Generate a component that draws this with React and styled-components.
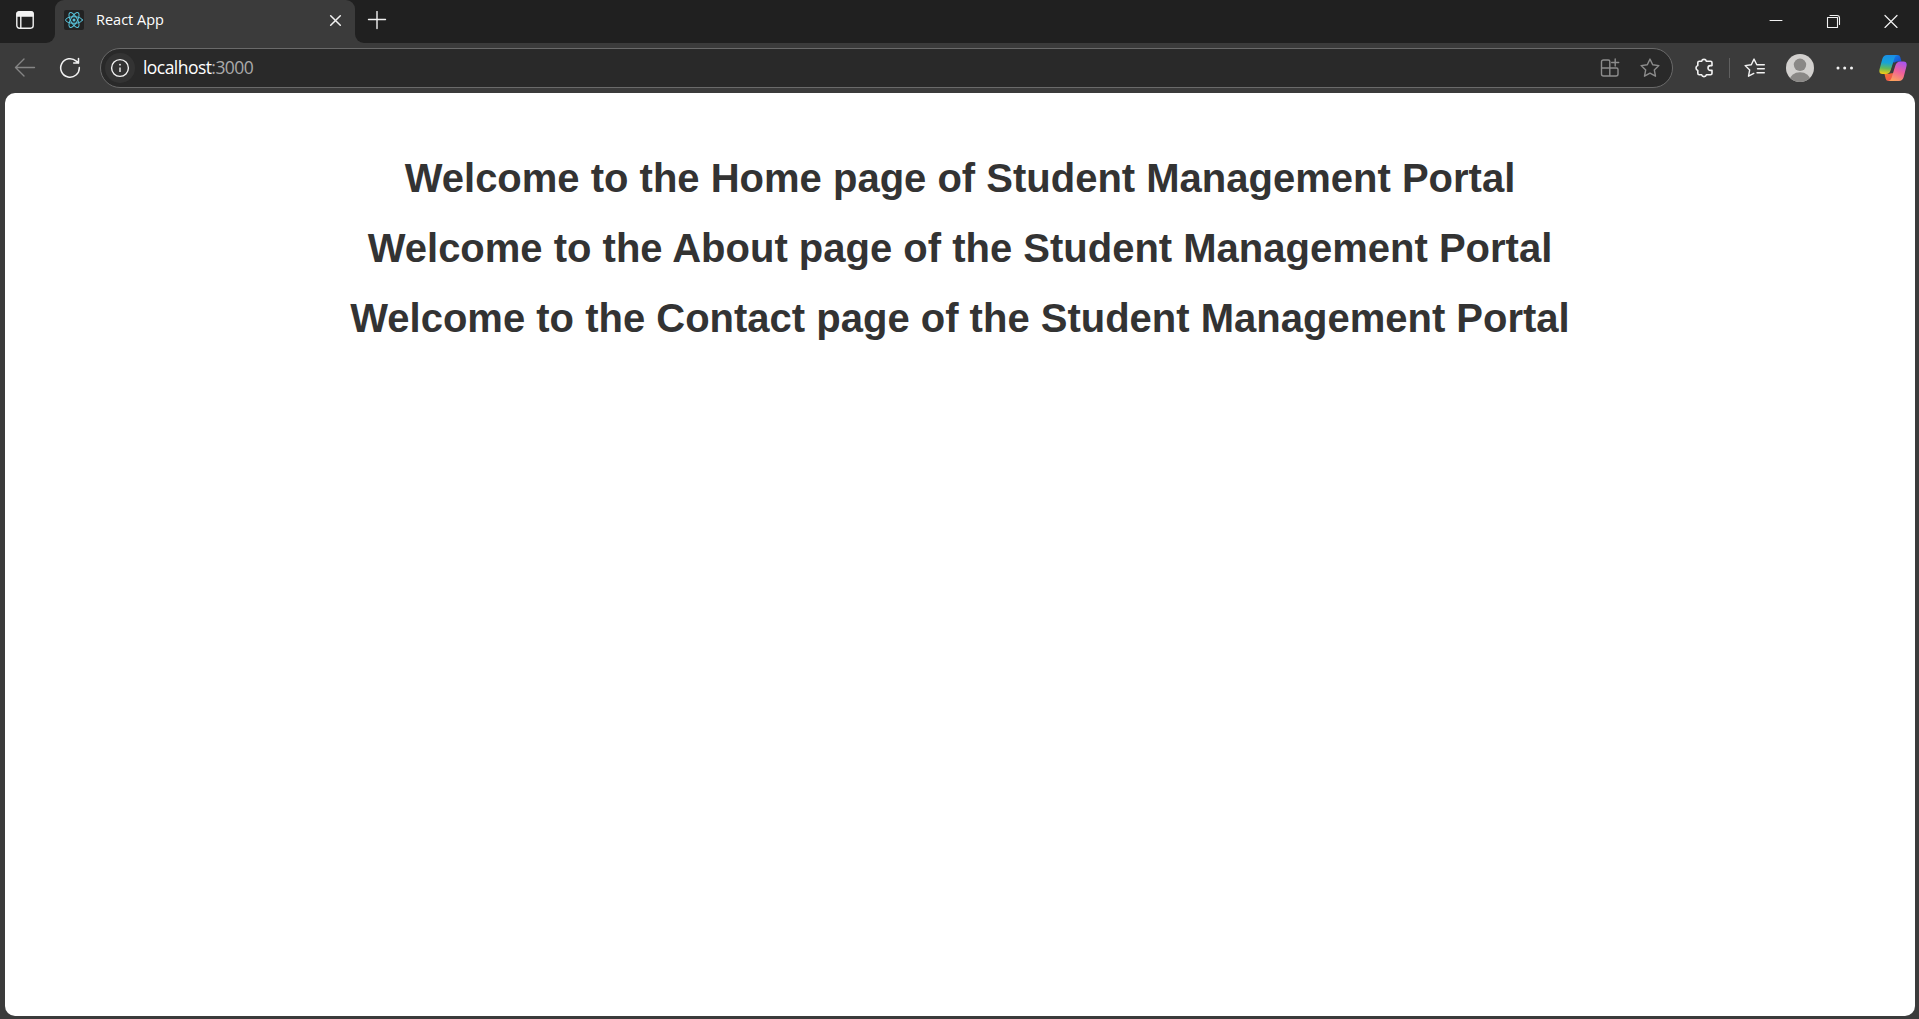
import React from "react";
import styled, { createGlobalStyle } from "styled-components";

const GlobalStyle = createGlobalStyle`
  *, *::before, *::after { box-sizing: border-box; }
  html, body { margin: 0; padding: 0; background: #3b3b3b; overflow: hidden; }
`;

const Window = styled.div`
  display: flex;
  flex-direction: column;
  width: 100vw;
  height: 100vh;
  background: #3b3b3b;
  font-family: "Open Sans", "Noto Sans", sans-serif;
`;

const TabStrip = styled.header`
  display: flex;
  height: 43px;
  flex: none;
`;

const StripStart = styled.div`
  display: flex;
  align-items: center;
  width: 55px;
  padding: 0 0 3px 16px;
  background: #202020;
  border-bottom-right-radius: 9px;
`;

const TabSlot = styled.div`
  width: 300px;
  background: linear-gradient(#202020 50%, #3b3b3b 50%);
`;

const Tab = styled.div`
  display: flex;
  align-items: center;
  height: 43px;
  padding: 0 13px 3px 9px;
  background: #3b3b3b;
  border-radius: 9px 9px 0 0;
`;

const Favicon = styled.span`
  display: flex;
  width: 20px;
  height: 20px;
  background: #222;
  border-radius: 2px;
`;

const TabTitle = styled.span`
  flex: 1;
  margin-left: 12px;
  color: #fff;
  font-size: 14.5px;
  line-height: 20px;
`;

const StripEnd = styled.div`
  display: flex;
  flex: 1;
  align-items: center;
  justify-content: space-between;
  padding: 0 21px 1px 12px;
  background: #202020;
  border-bottom-left-radius: 9px;
`;

const WindowControls = styled.div`
  display: flex;
  gap: 42px;
`;

const Toolbar = styled.nav`
  display: flex;
  align-items: center;
  flex: none;
  height: 50px;
  padding: 0 12px 0 14px;
`;

const Icon = styled.svg`
  display: block;
  flex: none;
  width: ${(p) => p.$w || 20}px;
  height: ${(p) => p.$h || p.$w || 20}px;
  margin-left: ${(p) => p.$gap || 0}px;
  fill: none;
  stroke: ${(p) => p.$color || "#f2f2f2"};
  stroke-width: ${(p) => p.$stroke || 1.4};
  stroke-linecap: round;
  stroke-linejoin: round;
`;

const AddressBar = styled.div`
  display: flex;
  align-items: center;
  flex: 1;
  height: 40px;
  margin-left: 19px;
  padding: 0 12px 0 4px;
  background: #292929;
  border: 1px solid #6a6a6a;
  border-radius: 20px;
`;

const SiteInfo = styled.span`
  display: flex;
  align-items: center;
  justify-content: center;
  width: 30px;
  height: 30px;
  background: #333;
  border-radius: 50%;
`;

const Address = styled.span`
  flex: 1;
  margin-left: 8px;
  padding-bottom: 2px;
  color: #fff;
  font-size: 17.5px;
  line-height: 24px;
  letter-spacing: -0.55px;
`;

const Port = styled.span`
  color: #a9a9a9;
`;

const Divider = styled.span`
  width: 1px;
  height: 20px;
  margin-left: 15px;
  background: #606060;
`;

const Viewport = styled.main`
  flex: 1;
  margin: 0 4px 3px 5px;
  padding-top: 50px;
  background: #fff;
  border-radius: 10px;
`;

const Heading = styled.h1`
  margin: 0;
  height: 70px;
  color: #333;
  font-family: "Liberation Sans", Arial, sans-serif;
  font-size: 40px;
  font-weight: 700;
  line-height: 70px;
  text-align: center;
  white-space: nowrap;
`;

const STAR =
  "M10 1.1l2.7 5.7 6.2.8-4.6 4.3 1.2 6.3L10 15.2l-5.5 3 1.2-6.3L1.1 7.6l6.2-.8z";

const PAGES = ["Home page of", "About page of the", "Contact page of the"];

const TabActionsIcon = () => (
  <Icon $w={18} viewBox="0 0 18 18">
    <rect x=".8" y=".8" width="16.4" height="16.4" rx="2.6" />
    <path d="M1 2.4Q1 1 3 1h12q2 0 2 1.4V5H1z" fill="#f2f2f2" />
    <path d="M4.8 5v12" />
  </Icon>
);

const ReactIcon = () => (
  <Icon $w={20} $color="#58c4dc" $stroke={1} viewBox="0 0 20 20">
    <ellipse cx="10" cy="10" rx="8.4" ry="3.3" />
    <ellipse cx="10" cy="10" rx="8.4" ry="3.3" transform="rotate(60 10 10)" />
    <ellipse cx="10" cy="10" rx="8.4" ry="3.3" transform="rotate(120 10 10)" />
    <circle cx="10" cy="10" r="1.5" fill="#58c4dc" stroke="none" />
  </Icon>
);

const CopilotIcon = () => (
  <Icon $w={28} $gap={24} viewBox="0 0 28 28">
    <defs>
      <linearGradient id="cpLeft" x1=".4" y1="0" x2=".3" y2="1">
        <stop offset="0" stopColor="#1a8fe6" />
        <stop offset=".4" stopColor="#16a3d8" />
        <stop offset=".7" stopColor="#62b95a" />
        <stop offset="1" stopColor="#f5cb14" />
      </linearGradient>
      <linearGradient id="cpRight" x1=".7" y1="0" x2=".3" y2="1">
        <stop offset="0" stopColor="#a955ee" />
        <stop offset=".5" stopColor="#f0609a" />
        <stop offset="1" stopColor="#fda35c" />
      </linearGradient>
      <linearGradient id="cpTop" x1="0" y1="0" x2="1" y2="1">
        <stop offset="0" stopColor="#1586e8" />
        <stop offset="1" stopColor="#1648cf" />
      </linearGradient>
      <linearGradient id="cpBottom" x1="0" y1="0" x2="1" y2="1">
        <stop offset="0" stopColor="#f5772c" />
        <stop offset="1" stopColor="#ec4b55" />
      </linearGradient>
    </defs>
    <g stroke="none">
      <path d="M13 1h5.500q2.200 0 2.800 2.200l1.200 4.200H18.500q-2 0-2.700 1.400L13 8z" fill="url(#cpTop)" />
      <path d="M15 27H9.500q-2.200 0-2.800-2.200L5.500 20H9.500q2 0 2.700-1.400L15 20z" fill="url(#cpBottom)" />
      <path d="M8 1h10.500q-2.200.3-3 3L12 15.500Q10.700 20 7 20H3.500Q-.6 20 .6 15L3.300 5Q4.500 1 8 1z" fill="url(#cpLeft)" />
      <path d="M20 27H9.500q2.200-.3 3-3L16.200 12q1.300-4.600 5-4.600h3.300q4.100 0 2.900 5L24.700 23q-1.200 4-4.700 4z" fill="url(#cpRight)" />
      <path d="M14.800 8.800h1.800L13 19.200h-2.100z" fill="#3b3b3b" />
    </g>
  </Icon>
);

export default function App() {
  return (
    <>
      <GlobalStyle />
      <Window>
        <TabStrip>
          <StripStart>
            <TabActionsIcon />
          </StripStart>
          <TabSlot>
            <Tab>
              <Favicon>
                <ReactIcon />
              </Favicon>
              <TabTitle>React App</TabTitle>
              <Icon $w={13} $h={12} $stroke={1.5} viewBox="0 0 13 12">
                <path d="M1.700 1.700l9.600 9.600M11.300 1.700l-9.600 9.600" />
              </Icon>
            </Tab>
          </TabSlot>
          <StripEnd>
            <Icon $w={20} viewBox="0 0 20 20">
              <path d="M1.500 8.500h17M10 .5v17" />
            </Icon>
            <WindowControls>
              <Icon $w={16} $h={14} $stroke={1} viewBox="0 0 16 14">
                <path d="M2 6.500h12" />
              </Icon>
              <Icon $w={16} $h={14} $stroke={1.1} viewBox="0 0 16 14">
                <path d="M1.500 3.500h10v10h-10zM4 1.500h7q2.500 0 2.500 2.500v6.500" />
              </Icon>
              <Icon $w={14} $h={14} $stroke={1.2} viewBox="0 0 14 14">
                <path d="M1 1.500l12 12M13 1.500l-12 12" />
              </Icon>
            </WindowControls>
          </StripEnd>
        </TabStrip>
        <Toolbar>
          <Icon $w={22} $color="#858585" viewBox="0 0 22 20">
            <path d="M20.500 9.500h-19M10 1L1.500 9.500 10 18" />
          </Icon>
          <Icon $w={22} $gap={23} $stroke={1.5} viewBox="0 0 22 22">
            <path d="M20.300 10.500a9.300 9.300 0 1 1-3-6.400l2.200 2M19.500 1.500v4.600h-4.800" />
          </Icon>
          <AddressBar>
            <SiteInfo>
              <Icon viewBox="0 0 20 20">
                <circle cx="10" cy="10" r="8.400" />
                <path d="M10 9.500v4.500" strokeLinecap="butt" />
                <circle cx="10" cy="6.700" r=".9" fill="#f2f2f2" stroke="none" />
              </Icon>
            </SiteInfo>
            <Address>
              localhost<Port>:3000</Port>
            </Address>
            <Icon $color="#8c8c8c" viewBox="0 0 20 20">
              <path d="M9.800 10V3.500Q9.800 2 8.300 2H3.500Q1.500 2 1.500 4v12q0 2 2 2h12.500q2 0 2-2v-4.500q0-1.500-1.500-1.500h-15M9.800 10v8M15.200 1v7M11.700 4.500h7" />
            </Icon>
            <Icon $gap={20} $color="#8c8c8c" viewBox="0 0 20 20">
              <path d={STAR} />
            </Icon>
          </AddressBar>
          <Icon $gap={21} $stroke={1.6} viewBox="0 0 20 20">
            <path d="M5.300 3.200h2.300a2.500 2.500 0 0 1 4.800 0h4.100q1.500 0 1.500 1.500v2.900h-1.600a2.400 2.400 0 0 0 0 4.800H18v2.900q0 1.500-1.500 1.500h-4.100a2.500 2.500 0 0 1-4.800 0H5.300q-1.500 0-1.500-1.500v-2.900a2.500 2.500 0 0 1 0-4.800V4.700q0-1.500 1.500-1.500z" />
          </Icon>
          <Divider />
          <Icon $w={22} $h={20} $gap={14} viewBox="0 0 22 20">
            <path d="M20.300 6.800H12.800L10 1.100 7.300 6.800 1.100 7.600l4.600 4.300L4.500 18.200l5.300-2.800M13.500 10.700h6.800M13 14.700h7.300" />
          </Icon>
          <Icon $w={28} $gap={20} viewBox="0 0 28 28">
            <defs>
              <clipPath id="avatarClip">
                <circle cx="14" cy="14" r="14" />
              </clipPath>
            </defs>
            <g clipPath="url(#avatarClip)" stroke="none">
              <rect width="28" height="28" fill="#d2d0ce" />
              <circle cx="14" cy="10.800" r="6.200" fill="#8a8886" />
              <ellipse cx="14" cy="26.500" rx="10.500" ry="8.300" fill="#8a8886" />
            </g>
          </Icon>
          <Icon $gap={21} viewBox="0 0 20 20">
            <g fill="#f2f2f2" stroke="none">
              <circle cx="3" cy="10" r="1.500" />
              <circle cx="9.700" cy="10" r="1.500" />
              <circle cx="16.500" cy="10" r="1.500" />
            </g>
          </Icon>
          <CopilotIcon />
        </Toolbar>
        <Viewport>
          {PAGES.map((page) => (
            <Heading key={page}>
              Welcome to the {page} Student Management Portal
            </Heading>
          ))}
        </Viewport>
      </Window>
    </>
  );
}
